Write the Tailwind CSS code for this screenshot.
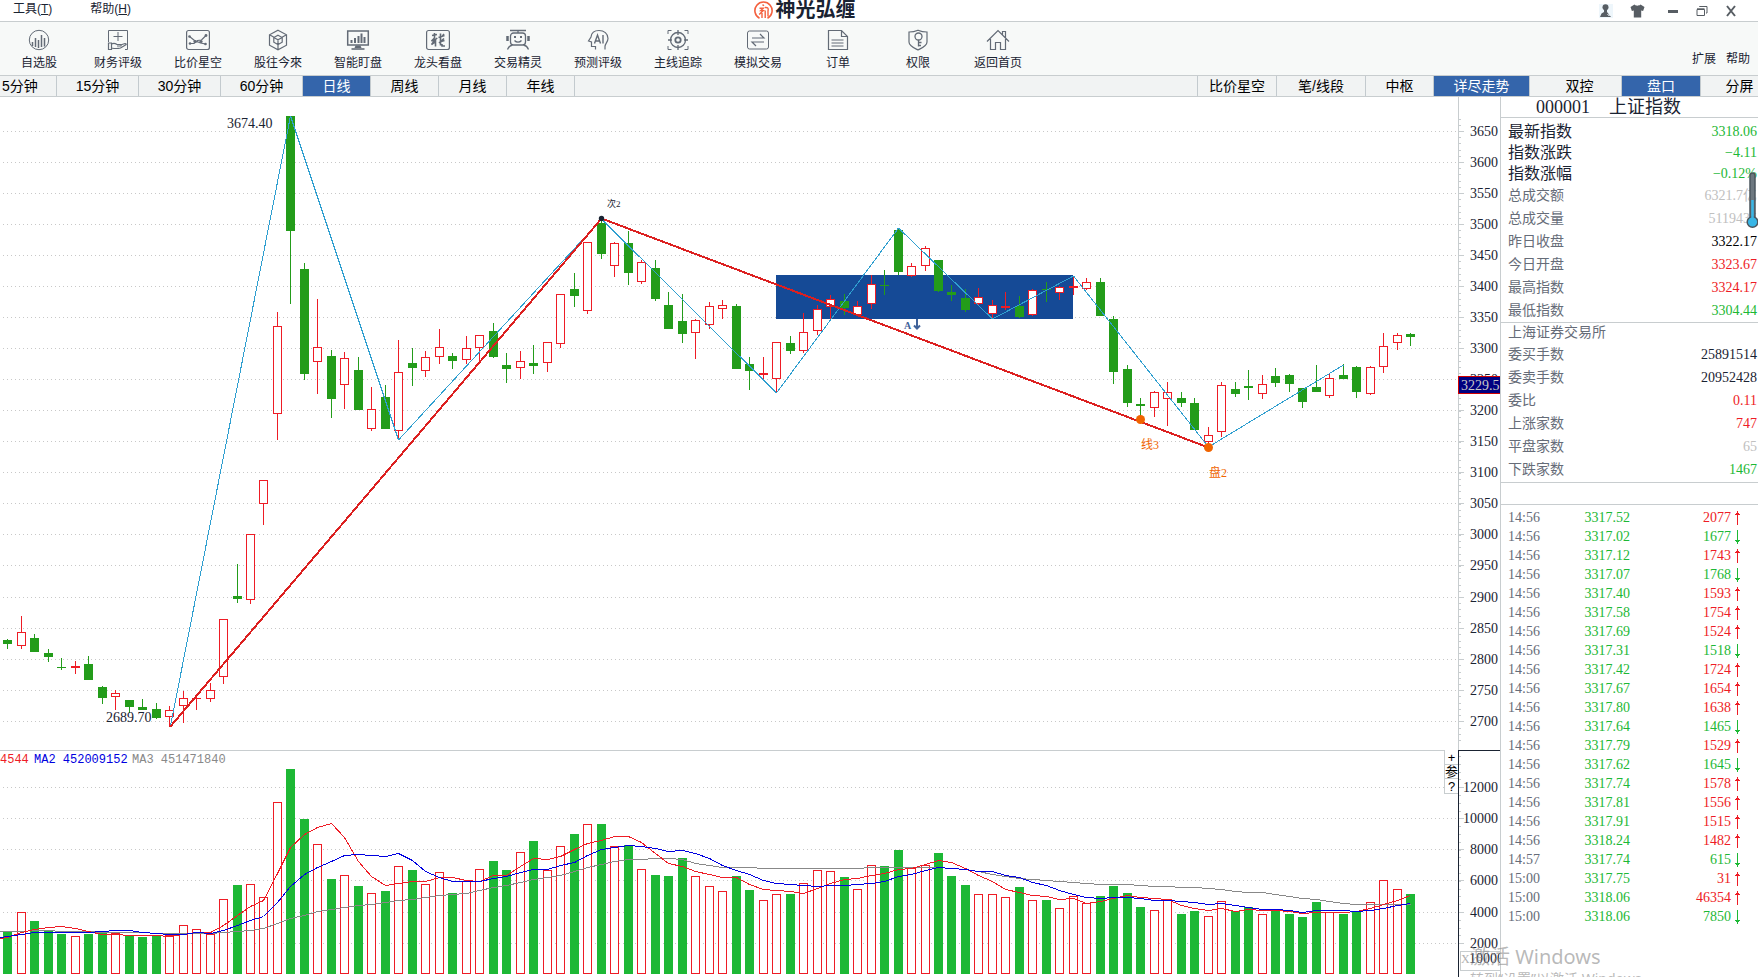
<!DOCTYPE html>
<html lang="zh-CN">
<head>
<meta charset="utf-8">
<meta name="viewport" content="width=device-width, initial-scale=1">
<title>神光弘缠</title>
<script src="https://cdn.jsdelivr.net/npm/@tailwindcss/browser@4"></script>
</head>
<body class="flex h-screen flex-col overflow-hidden bg-white font-['Liberation_Sans','Noto_Sans_CJK_SC',sans-serif] text-[#1a2332]">

<header class="flex h-[22px] shrink-0 items-center border-b border-[#c8cdcf] text-[12px]">
  <nav class="flex flex-[757] items-center gap-[38px] pb-1 pl-[13px]">
    <a href="#" class="leading-none">工具(<u>T</u>)</a>
    <a href="#" class="leading-none">帮助(<u>H</u>)</a>
  </nav>
  <h1 class="flex items-center gap-[2px] pb-px">
    <svg class="size-[19px]" viewBox="0 0 19 19" fill="none" stroke="#f4603e" stroke-width="1.6"><path d="M5.500 17.200A8.600 8.600 0 1 1 13.500 17.200"/><path d="M8.500 3.600l1.500 1.200M5.500 7.300h3.800L6.800 9.600h2.400L5.200 13.400M8 12v5M11 6.500c3-.3 3.600 1 3 3.500v5.500M11.200 9.500v7.500" stroke-width="1.400"/></svg>
    <span class="text-[20px] leading-none font-bold">神光弘缠</span>
  </h1>
  <div class="flex flex-[900] items-center justify-end gap-[17px] pr-[21px] text-[#575d63]">
    <button aria-label="用户" class="bg-[#eef6fb]"><svg class="size-[14px]" viewBox="0 0 14 14" fill="currentColor"><circle cx="6.500" cy="3.300" r="3"/><path d="M5 5.500h3V8l4 5H1l1.500-3.500L5 8z"/><path d="M8.500 10l1.500 1.800L13 8" fill="none" stroke="#eef6fb" stroke-width="1"/></svg></button>
    <button aria-label="皮肤" class="mr-[5px]"><svg class="h-[14px] w-[15px]" viewBox="0 0 15 14" fill="currentColor"><path d="M4.500.5c1.500 1.600 4.500 1.600 6 0l4 2.500-1.400 4-1.900-.6V13.500H3.800V6.400L1.900 7 .5 3z"/></svg></button>
    <button aria-label="最小化"><svg class="size-[12px]" viewBox="0 0 12 12"><path d="M1 6.500h10" stroke="currentColor" stroke-width="3"/></svg></button>
    <button aria-label="还原"><svg class="size-[12px]" viewBox="0 0 12 12" fill="none" stroke="currentColor"><path d="M1 4.500h7.500v6H1zM1 3.800h7.500M3.500 2V1.500h7.500V8H10"/></svg></button>
    <button aria-label="关闭"><svg class="size-[12px]" viewBox="0 0 12 12"><path d="M2 1l8 10M10 1L2 11" stroke="currentColor" stroke-width="2"/></svg></button>
  </div>
</header>

<section class="flex h-[54px] shrink-0 border-b border-[#c8cdcf] bg-[#f7f9f8] text-[12px]">
  <div class="flex flex-1 [&>button]:flex [&>button]:w-20 [&>button]:flex-col [&>button]:items-center [&>button]:gap-[6px] [&>button]:pt-[7px] [&>button]:leading-none [&_svg]:h-[22px] [&_svg]:w-[24px] [&_svg]:fill-none [&_svg]:stroke-[#636b76]">
    <button class="max-w-[78px]"><svg viewBox="0 0 24 22"><circle cx="12" cy="11" r="9.700"/><path d="M5.500 13v4M8.500 9v9M11.500 11v8M14.500 6v12M17.500 9v8.500" stroke-width="1.500"/></svg>自选股</button>
    <button><svg viewBox="0 0 24 22"><path d="M2.500 13V1.500h19v19H19M12 3v9M7.500 7.500h9"/><path d="M2.500 14h3v6.500h-3zM5.500 15c3-1.500 4-.5 5.500.5h3.500c1 0 .8 1.500 0 1.500H11M14.500 16l4.500-1.500c1.500 0 1.500 1 .5 1.500l-5 3c-3 .8-5 .8-9 0" stroke-width="1.200"/></svg>财务评级</button>
    <button><svg viewBox="0 0 24 22"><rect x=".6" y="1.500" width="22.800" height="19" rx="2" stroke-width="1.200"/><path d="M3.500 14.500h4.500l3.500-3 4-.5 4.500-4.500M3.500 7.500l5 4 6 2.500 5 1" stroke-width="1.200"/><g fill="#636b76" stroke="none"><circle cx="3.500" cy="7.500" r="1.300"/><circle cx="4" cy="14.500" r="1.300"/><circle cx="9" cy="12.500" r="1.600"/><circle cx="15" cy="12.500" r="1.600"/><circle cx="20" cy="6.500" r="1.400"/><circle cx="19.500" cy="15" r="1.300"/></g></svg>比价星空</button>
    <button><svg viewBox="0 0 24 22"><path d="M12 1.200l8.500 4.600v10.400L12 20.800l-8.500-4.600V5.800zM3.500 5.800L8 8.200M20.500 5.800L16 8.200M12 15.500v5" stroke-width="1.200"/><path d="M12 6.200l4.200 2.300v4.700L12 15.500l-4.200-2.300V8.500zM7.800 8.500l4.200 2.200 4.200-2.200M12 10.700v4.800" stroke-width="1.200"/></svg>股往今來</button>
    <button><svg viewBox="0 0 24 22"><path d="M1.700 2h20.600v14H1.700z" stroke-width="1.500"/><path d="M5.500 11v3M9 9v5M12.500 7v7M15.500 4.500V14M18.500 8v6" stroke-width="2"/><path d="M9.500 16.500h5l1 2.500h-7z" fill="#636b76" stroke="none"/><path d="M5.500 20h13" stroke-width="1.600"/></svg>智能盯盘</button>
    <button><svg viewBox="0 0 24 22"><rect x=".6" y="1.500" width="22.800" height="19" rx="2" stroke-width="1.200"/><path d="M6 6.500l5-1M8.500 4v5l-3 3 4-1.500-4 5 4-3v5M11 9l-2 2M14.500 4.500v12M12.500 8.500l6-2M18 5l-1.500 2M18 9.500L13 14M15 12.500l3.500-1M16 15v2h3" stroke-width="1.600"/></svg>龙头看盘</button>
    <button><svg viewBox="0 0 24 22"><path d="M4 1.500h16M12 1.500V4" stroke-width="1.300"/><rect x="4.500" y="4" width="15" height="12" rx="3" stroke-width="1.300"/><path d="M1.500 7v5M22.500 7v5" stroke-width="2.500"/><path d="M8.500 11.500c2 2.200 5 2.200 7 0M1.500 20.500c1-2.500 2.500-4 5-4.500M22.500 20.500c-1-2.500-2.500-4-5-4.500" stroke-width="1.300"/><path d="M8 8h2M14 8h2" stroke-width="2"/></svg>交易精灵</button>
    <button><svg viewBox="0 0 24 22"><path d="M9.500 20.500v-3H5.500V13L2.500 12 5 8C5.500 3.500 9 1.500 13 1.500c5 0 9 3 9 8 0 3.500-3 5-3 8v3" stroke-width="1.200"/><path d="M8.500 14.500l3-8.500 3 8.500M9.500 12h4M17 6v8.500" stroke-width="1.400"/></svg>预测评级</button>
    <button><svg viewBox="0 0 24 22"><path d="M2 5V1.500h3.500M18.500 1.500H22V5M22 17v3.500h-3.500M5.500 20.500H2V17"/><circle cx="12" cy="11" r="7.500" stroke-width="1.300"/><circle cx="12" cy="11" r="2.700" stroke-width="1.800"/><path d="M12 1v5M12 16v5M2 11h4M18 11h4" stroke-width="1.300"/></svg>主线追踪</button>
    <button><svg viewBox="0 0 24 22"><rect x="1.500" y="2" width="21" height="18" rx="2"/><path d="M6 9h12l-4-4M18 13H6l4 4" stroke-width="1.200"/></svg>模拟交易</button>
    <button><svg viewBox="0 0 24 22"><path d="M2.500 1.500h13l6 6v13h-19zM15.500 1.500v6h6" stroke-width="1.200"/><path d="M5.500 11h12M5.500 14h12M5.500 17h12"/></svg>订单</button>
    <button><svg viewBox="0 0 24 22"><path d="M12 1.200C9 2.500 6 3 3 3v10c0 4 5 6 9 8 4-2 9-4 9-8V3c-3 0-6-.5-9-1.800z" stroke-width="1.200"/><circle cx="12.500" cy="7.500" r="3.500" stroke-width="1.300"/><path d="M12.500 11v6.500M12.500 13.500h3M12.500 16.500h2.500" stroke-width="1.300"/></svg>权限</button>
    <button><svg viewBox="0 0 24 22"><path d="M1 12.500L12 1.500l11 11M4.500 10v10.500h5v-7h5v7h5V10M16.500 5.500V2.500h3v6" stroke-width="1.200"/></svg>返回首页</button>
  </div>
  <div class="flex items-center gap-[10px] pt-5 pr-2 leading-none">
    <button>扩展</button>
    <button>帮助</button>
  </div>
</section>

<nav class="flex h-[21px] shrink-0 border-b border-[#c8cdcf] bg-[#f1f3f3] text-[14px] leading-none text-black [&_button]:border-[#c3cace] [&_button]:pb-px">
  <button class="w-[57px] border-r pl-[2px] text-left">5分钟</button>
  <button class="w-[82px] border-r">15分钟</button>
  <button class="w-[82px] border-r">30分钟</button>
  <button class="w-[82px] border-r">60分钟</button>
  <button class="w-[68px] border-r bg-[#3465ab] text-white">日线</button>
  <button class="w-[68px] border-r">周线</button>
  <button class="w-[68px] border-r">月线</button>
  <button class="w-[68px] border-r">年线</button>
  <span class="flex-1"></span>
  <button class="w-[80px] border-x">比价星空</button>
  <button class="w-[89px] border-r">笔/线段</button>
  <button class="w-[68px] border-r">中枢</button>
  <button class="w-[96px] border-r bg-[#3465ab] text-white">详尽走势</button>
  <button class="w-[92px] border-r pl-2">双控</button>
  <button class="w-[79px] border-r bg-[#3465ab] text-white">盘口</button>
  <button class="w-[57px] pl-5">分屏</button>
</nav>

<main class="flex min-h-0 flex-1">
  <div class="relative min-w-0 flex-1">
    <svg id="price" class="block w-full" viewBox="0 97 1500 653" role="img" aria-label="日线K线图"></svg>
    <div class="relative">
      <svg id="volume" class="block w-full" viewBox="0 750 1500 227" role="img" aria-label="成交量"></svg>
      <div class="absolute top-0 right-[42px] flex w-[14px] flex-col items-center border-l border-[#c8cdcf] bg-white text-[13px] leading-none text-black">
        <button class="h-[15px] w-full border-b border-[#c8cdcf]">+</button>
        <button class="h-[14px] w-[13px] border-b border-[#c8cdcf]">参</button>
        <button class="h-[15px] w-full border-b border-[#c8cdcf]">?</button>
      </div>
    </div>
  </div>

  <aside class="relative w-[258px] shrink-0 border-l border-[#c8cdcf] bg-white font-['Liberation_Serif','Noto_Sans_CJK_SC',serif] text-[14px] leading-none">
    <h2 class="flex h-[21px] items-center gap-[19px] border-b border-[#c8cdcf] pl-[35px] text-[18px]"><span>000001</span><span>上证指数</span></h2>
    <div class="border-b border-[#c8cdcf] pt-[3px]">
      <table class="w-full [&_td]:py-0 [&_td]:pr-px [&_td]:text-right [&_th]:py-0 [&_th]:pl-[7px] [&_th]:text-left [&_th]:font-normal">
        <tbody class="text-[#1db835] [&_th]:text-[16px] [&_th]:text-[#1a2332]">
          <tr class="h-[21px]"><th scope="row">最新指数</th><td>3318.06</td></tr>
          <tr class="h-[21px]"><th scope="row">指数涨跌</th><td>−4.11</td></tr>
          <tr class="h-[21px]"><th scope="row">指数涨幅</th><td>−0.12%</td></tr>
        </tbody>
        <tbody class="[&_th]:text-[#666c78]">
          <tr class="h-[23px]"><th scope="row">总成交额</th><td class="text-[#c0c0c0]">6321.7亿</td></tr>
          <tr class="h-[23px]"><th scope="row">总成交量</th><td class="text-[#c0c0c0]">5119435</td></tr>
          <tr class="h-[23px]"><th scope="row">昨日收盘</th><td class="text-black">3322.17</td></tr>
          <tr class="h-[23px]"><th scope="row">今日开盘</th><td class="text-[#ee1c25]">3323.67</td></tr>
          <tr class="h-[23px]"><th scope="row">最高指数</th><td class="text-[#ee1c25]">3324.17</td></tr>
          <tr class="h-[23px]"><th scope="row">最低指数</th><td class="text-[#1db835]">3304.44</td></tr>
        </tbody>
      </table>
    </div>
    <div class="border-b border-[#c8cdcf] pb-px">
      <table class="w-full [&_td]:py-0 [&_td]:pr-px [&_td]:text-right [&_th]:py-0 [&_th]:pl-[7px] [&_th]:text-left [&_th]:font-normal [&_th]:text-[#666c78]">
        <tbody>
          <tr class="h-5"><th scope="row" colspan="2">上海证券交易所</th></tr>
          <tr class="h-[23px]"><th scope="row">委买手数</th><td>25891514</td></tr>
          <tr class="h-[23px]"><th scope="row">委卖手数</th><td>20952428</td></tr>
          <tr class="h-[23px]"><th scope="row">委比</th><td class="text-[#ee1c25]">0.11</td></tr>
          <tr class="h-[23px]"><th scope="row">上涨家数</th><td class="text-[#ee1c25]">747</td></tr>
          <tr class="h-[23px]"><th scope="row">平盘家数</th><td class="text-[#c0c0c0]">65</td></tr>
          <tr class="h-[23px]"><th scope="row">下跌家数</th><td class="text-[#1db835]">1467</td></tr>
        </tbody>
      </table>
    </div>
    <div class="h-[22px] border-b border-[#c8cdcf]"></div>
    <table class="mt-[3px] w-full table-fixed">
      <colgroup><col class="w-[70px]"><col class="w-[59px]"><col class="w-[101px]"><col></colgroup>
      <tbody id="ticks"></tbody>
    </table>
    <svg class="absolute top-[75px] right-0 h-[57px] w-[12px]" viewBox="0 0 12 57" aria-hidden="true"><rect x="4" y="1" width="5" height="50" rx="2.500" fill="#6d7880" stroke="#4b565e" stroke-width="1.500"/><circle cx="6.500" cy="50" r="5.300" fill="#38b6e6" stroke="#4b565e" stroke-width="1.500"/><path d="M6.500 28v20" stroke="#38b6e6" stroke-width="2.500"/></svg>
    <div class="absolute bottom-0 -left-[31px] h-[33px] overflow-hidden font-['Noto_Sans','Noto_Sans_CJK_SC',sans-serif] whitespace-nowrap text-[#8a8a8a]/60">
      <p class="text-[20px] leading-[26px]">激活 Windows</p>
      <p class="text-[14px] leading-[18px]">转到“设置”以激活 Windows。</p>
    </div>
  </aside>
</main>

<script>
const RED = '#ee1c25', GREEN = '#239c1a', VOLGREEN = '#1db835', DARK = '#1a2332', LINE = '#c8cdcf';
const FONT = "font-family=\"'Liberation Serif','Noto Sans CJK SC',serif\"";
// Each bar: direction, high, body top, body bottom, low, volume top (y positions)
const bars = `g 639 640 644 649 575|r 616 632 646 649 516|g 634 638 652 652 543|g 649 653 657 662 573|g 658 667 668 670 582|r 661 666 668 674 589|g 656 664 680 680 582|g 686 687 698 704 579|r 690 693 697 710 580|g 700 700 707 713 586|g 699 707 710 710 591|g 703 709 718 719 586|r 706 710 717 727 586|r 691 698 706 723 556|r 695 698 699 710 568|r 683 690 699 702 583|r 619 619 677 684 478|g 564 596 599 603 435|r 534 534 600 604 433|r 480 480 504 525 472|r 312 326 414 440 187|g 116 116 231 304 87|g 263 269 374 380 237|r 299 347 362 394 313|g 350 356 399 418 417|r 352 358 385 409 406|g 357 370 410 410 438|r 387 409 429 431 460|g 385 397 429 429 453|r 340 372 431 439 379|g 348 363 368 386 390|r 351 357 371 377 433|r 329 347 357 364 397|g 353 356 361 369 459|r 336 348 360 364 424|r 335 335 348 362 388|g 323 331 357 358 363|g 353 365 369 383 390|r 351 361 368 379 337|g 345 363 366 374 303|r 342 342 363 372 391|r 294 294 344 348 319|g 273 289 296 307 282|r 242 242 311 314 253|g 219 223 254 259 252|r 242 243 266 277 319|g 231 243 273 285 316|r 260 262 282 284 388|g 260 268 299 301 405|g 292 305 329 329 408|g 294 321 334 343 354|r 319 320 333 359 409|r 302 306 325 329 439|r 300 305 309 319 454|g 304 306 369 369 408|g 357 364 371 390 450|r 357 373 375 379 481|r 342 342 379 393 463|g 336 343 351 354 462|r 313 332 351 353 430|r 305 309 331 335 391|r 295 299 307 319 394|g 294 301 308 315 411|r 301 306 315 315 448|r 275 284 304 309 376|g 270 285 286 295 378|g 228 230 272 275 330|r 263 266 276 277 385|r 246 248 266 271 376|g 260 260 291 292 339|g 285 292 295 301 408|g 289 298 310 312 435|r 288 297 304 305 463|r 300 305 314 319 463|r 292 306 308 310 472|g 296 306 317 318 441|r 289 290 315 316 481|g 282 289 290 302 480|r 286 287 293 300 505|r 276 286 288 295 469|r 278 282 289 290 490|g 278 282 316 316 468|g 316 319 372 384 438|g 365 369 403 407 459|g 398 404 406 417 501|r 391 392 408 417 511|r 382 392 399 426 478|g 392 398 403 407 522|g 398 403 430 430 513|r 427 435 442 445 529|r 382 385 432 437 484|g 382 389 394 397 514|g 370 386 388 400 502|r 375 384 394 399 523|g 368 376 383 387 513|g 374 375 384 392 522|g 388 388 402 408 531|g 365 387 392 392 486|r 374 378 396 398 516|g 364 375 379 379 522|g 366 367 392 398 514|r 366 367 394 395 487|r 333 346 367 373 421|r 333 335 343 350 448|g 333 334 337 346 462`
  .split('|').map(s => { const p = s.split(' '); return [p[0], ...p.slice(1).map(Number)]; });
const cx = i => Math.round(7.18 + 13.49 * i);
const line = (x1, y1, x2, y2, c, extra = '') => `<path d="M${x1} ${y1}L${x2} ${y2}" stroke="${c}" fill="none" ${extra}/>`;
const text = (x, y, s, c = DARK, size = 14, extra = '') => `<text x="${x}" y="${y}" fill="${c}" font-size="${size}" ${FONT} ${extra}>${s}</text>`;

// Price pane
let p = '<g shape-rendering="crispEdges">';
const gy = i => Math.floor(131 + 31.07 * i);
for (let i = 0; i < 20; i++) p += line(3, gy(i) + .5, 1458, gy(i) + .5, '#c8c8c8', 'stroke-dasharray="1 3"') + line(1458, gy(i) + .5, 1464, gy(i) + .5, LINE);
for (let k = -2; k <= 98; k++) { const y = Math.round(131 + 6.214 * k) + .5; p += line(1459, y, 1461, y, LINE); }
p += line(1458.5, 97, 1458.5, 750, LINE);
p += '<rect x="776" y="275" width="297" height="44" fill="#154a96"/>';
bars.forEach(([d, h, t, b, l], i) => {
  const x = cx(i), c = d === 'g' ? GREEN : RED;
  if (h < t) p += line(x + .5, h, x + .5, t, c);
  if (l > b) p += line(x + .5, b, x + .5, l, c);
  p += d === 'g' || b - t < 3 ? `<rect x="${x - 4}" y="${t}" width="9" height="${b - t}" fill="${c}"/>`
    : `<rect x="${x - 3.5}" y="${t + .5}" width="8" height="${b - t - 1}" fill="#fff" stroke="${c}"/>`;
});
p += '<path d="M170.500 726L290.500 116L398.500 440L601.500 219L776.500 393L898.500 228L992.500 319L1073.500 276L1208.500 447L1343.500 365" fill="none" stroke="#2f9fd0" stroke-linejoin="bevel"/>';
p += '<path d="M170 727L601.500 218.500L1208.500 447.500" fill="none" stroke="#dc2020" stroke-width="2"/>';
p += '</g><circle cx="601.500" cy="218.500" r="2.700" fill="#1a2332"/><circle cx="1140.500" cy="419.500" r="4.500" fill="#f06400"/><circle cx="1208.500" cy="447.500" r="4.500" fill="#f06400"/>';
p += text(227, 128, '3674.40') + text(106, 722, '2689.70') + text(607, 207, '次2', DARK, 9);
p += text(1141, 449, '线3', '#f06400', 12) + text(1209, 477, '盘2', '#f06400', 12) + text(904, 329, 'A', '#3f6299', 10, 'font-weight="bold"');
p += '<path d="M917 319v9M914 325.500L917 328.500L920 325.500" stroke="#3f6299" stroke-width="2" fill="none"/>';
for (let i = 0; i < 20; i++) p += text(1498, gy(i) + 5, 3650 - 50 * i, DARK, 14, 'text-anchor="end"');
p += '<rect x="1458.500" y="376.500" width="46" height="17" fill="#000080" stroke="#d00000"/>' + text(1461, 390, '3229.5', '#c8c8c8');
document.getElementById('price').innerHTML = p;

// Volume pane
let v = '<g shape-rendering="crispEdges">';
const vy = [787, 818, 849, 880, 912, 943];
vy.forEach(y => { v += line(3, y + .5, 1458, y + .5, '#c8c8c8', 'stroke-dasharray="1 3"') + line(1459, y + .5, 1464, y + .5, LINE); });
for (let k = 0; k < 32; k++) { const y = Math.round(756 + 7.8 * k) + .5; if (y < 945) v += line(1459, y, 1461, y, LINE); }
v += line(0, 750.5, 1458, 750.5, LINE) + line(1458, 750.5, 1500, 750.5, DARK) + line(1458.5, 750, 1458.5, 977, DARK);
bars.forEach(([d, , , , , q], i) => {
  const x = cx(i), y = Math.round(740 + q / 3);
  v += d === 'g' ? `<rect x="${x - 4}" y="${y}" width="9" height="${974 - y}" fill="${VOLGREEN}"/>`
    : `<rect x="${x - 3.5}" y="${y + .5}" width="8" height="${973 - y}" fill="#fff" stroke="${RED}"/>`;
});
const ma1 = [591,577,566,562,559,563,573,583,583,586,586,586,587,582,577,577,556,525,498,480,400,322,283,261,250,292,363,408,436,428,424,424,412,412,421,422,406,406,378,355,358,348,328,310,300,287,287,306,338,370,377,394,403,411,412,432,448,451,454,458,445,429,417,415,404,400,388,384,371,361,367,385,406,422,448,455,466,469,478,475,488,484,475,466,472,475,478,496,505,511,505,514,508,511,510,514,520,517,516,517,514,505,493,479,466];
const ma2 = [589,583,577,577,577,577,577,574,571,571,575,580,583,583,577,580,571,556,541,529,487,439,402,380,364,346,343,346,349,340,359,394,410,424,424,424,415,409,397,388,387,376,365,346,328,322,316,317,325,334,331,340,355,374,391,403,421,428,433,436,439,436,436,433,430,424,409,401,391,382,383,387,393,393,405,412,427,436,451,463,472,475,472,472,475,481,481,484,487,493,490,496,502,508,508,511,517,511,511,511,514,511,505,496,490];
const ma3 = [574,574,571,571,574,574,574,575,575,577,577,580,580,580,580,580,577,574,569,563,550,535,524,514,508,502,496,492,487,481,476,472,466,463,458,451,442,436,427,418,412,404,394,382,373,364,358,358,355,355,358,370,376,381,382,382,385,385,385,385,385,385,385,385,382,382,382,382,382,382,384,388,394,403,409,413,417,421,424,427,430,433,433,433,436,439,439,442,442,445,448,454,457,457,463,469,475,478,484,490,493,493,493,493,493];
[[ma3, '#888888', 574], [ma1, RED, 595], [ma2, '#0000e0', 590]].forEach(([m, c, s]) => {
  v += `<polyline fill="none" stroke="${c}" points="0,${Math.round(740 + s / 3) + .5} ${m.map((q, i) => `${cx(i) + .5},${Math.round(740 + q / 3) + .5}`).join(' ')}"/>`;
});
v += '<rect x="1460.500" y="951.500" width="44" height="19" fill="#fff" stroke="#c8cdcf"/></g>';
const mono = (x, s, c) => `<text x="${x}" y="763" fill="${c}" font-size="12" font-family="'Liberation Mono',monospace">${s}</text>`;
v += mono(0, '4544', RED) + mono(34, 'MA2 452009152', '#0000e0') + mono(132, 'MA3 451471840', '#888888');
vy.forEach((y, i) => { v += text(1498, y + 5, 12000 - 2000 * i, DARK, 14, 'text-anchor="end"'); });
v += text(1461, 963, 'X', '#b0b0b0', 12) + text(1469, 963, '10000');
document.getElementById('volume').innerHTML = v;

// Tick-by-tick trades: time, price, volume, direction
const ticks = `14:56 3317.52 2077 u|14:56 3317.02 1677 d|14:56 3317.12 1743 u|14:56 3317.07 1768 d|14:56 3317.40 1593 u|14:56 3317.58 1754 u|14:56 3317.69 1524 u|14:56 3317.31 1518 d|14:56 3317.42 1724 u|14:56 3317.67 1654 u|14:56 3317.80 1638 u|14:56 3317.64 1465 d|14:56 3317.79 1529 u|14:56 3317.62 1645 d|14:56 3317.74 1578 u|14:56 3317.81 1556 u|14:56 3317.91 1515 u|14:56 3318.24 1482 u|14:57 3317.74 615 d|15:00 3317.75 31 u|15:00 3318.06 46354 u|15:00 3318.06 7850 d`.split('|').map(s => s.split(' '));
document.getElementById('ticks').innerHTML = ticks.map(([t, pr, q, d]) => `<tr class="h-[19px] ${d === 'u' ? 'text-[#ee1c25]' : 'text-[#1db835]'}"><td class="p-0 pl-[7px] text-[#666c78]">${t}</td><td class="p-0 text-right text-[#1db835]">${pr}</td><td class="p-0 text-right">${q}</td><td class="p-0 pl-[3px]"><svg class="block h-[14px] w-[7px]" viewBox="0 0 7 14" fill="currentColor" shape-rendering="crispEdges"><path d="${d === 'u' ? 'M3 0h1v2h1v1h1v1H4v10H3V4H1V3h1V2h1z' : 'M3 14h1v-2h1v-1h1v-1H4V0H3v10H1v1h1v1h1z'}"/></svg></td></tr>`).join('');
</script>
</body>
</html>
